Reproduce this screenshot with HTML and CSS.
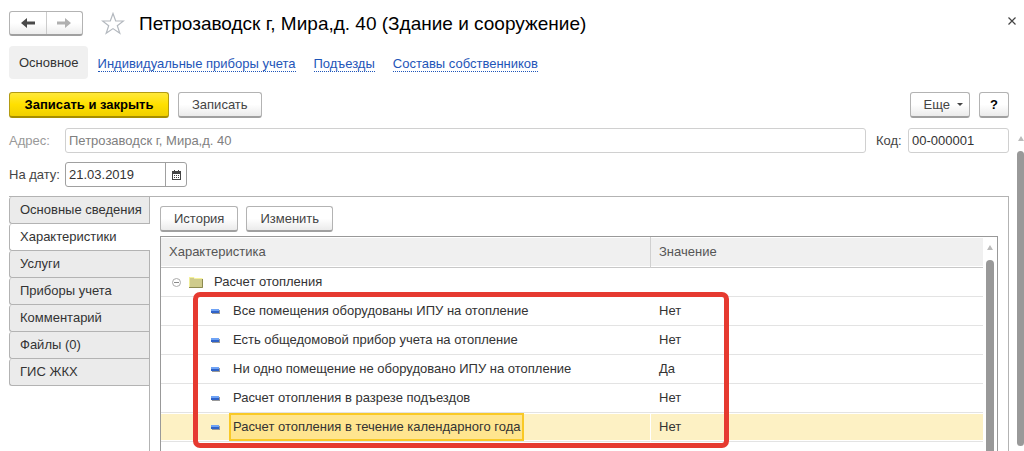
FILE: index.html
```html
<!DOCTYPE html>
<html lang="ru">
<head>
<meta charset="utf-8">
<title>Петрозаводск г, Мира,д. 40 (Здание и сооружение)</title>
<link rel="stylesheet" href="styles.css">
</head>
<body>
<header class="titlebar">
  <div class="history">
    <button class="history-btn" type="button" aria-label="Назад"><svg width="14" height="10" viewBox="0 0 14 10"><path d="M0 5 6 0v3.500h8v3H6V10z" fill="#4a4a4a"/></svg></button>
    <button class="history-btn" type="button" aria-label="Вперед"><svg width="14" height="10" viewBox="0 0 14 10"><path d="M14 5 8 0v3.500H0v3h8V10z" fill="#b0b0b0"/></svg></button>
  </div>
  <button class="icon-btn star" type="button" aria-label="В избранное"><svg width="24" height="23" viewBox="0 0 24 23"><path d="M12 1.500 14.700 9H22.500L16.300 13.700 18.800 21.200 12 16.600 5.200 21.200 7.700 13.700 1.500 9H9.300z" fill="#fff" stroke="#b3b8be" stroke-width="1.200"/></svg></button>
  <h1 class="title">Петрозаводск г, Мира,д. 40 (Здание и сооружение)</h1>
  <button class="icon-btn close" type="button" aria-label="Закрыть"><svg width="8" height="8" viewBox="0 0 8 8"><path d="M.5.5l7 7M7.500.5l-7 7" stroke="#444" stroke-width="1.200"/></svg></button>
</header>

<nav class="sections">
  <span class="section-current">Основное</span>
  <a class="section-link" href="#meters">Индивидуальные приборы учета</a>
  <a class="section-link" href="#entrances">Подъезды</a>
  <a class="section-link" href="#owners">Составы собственников</a>
</nav>

<div class="commands">
  <button class="btn btn-primary" type="button">Записать и закрыть</button>
  <button class="btn" type="button">Записать</button>
  <button class="btn btn-more" type="button">Еще<svg width="6" height="3" viewBox="0 0 6 3"><path d="M0 0h6L3 3z" fill="#444"/></svg></button>
  <button class="btn btn-help" type="button">?</button>
</div>

<main class="form">
  <div class="form-body">
    <div class="field-row">
      <label class="label label-muted" for="address">Адрес:</label>
      <input class="input input-muted" id="address" type="text" value="Петрозаводск г, Мира,д. 40" readonly>
      <label class="label label-code" for="code">Код:</label>
      <input class="input input-code" id="code" type="text" value="00-000001">
    </div>
    <div class="field-row">
      <label class="label" for="date">На дату:</label>
      <div class="date">
        <input class="date-input" id="date" type="text" value="21.03.2019">
        <button class="date-btn" type="button" aria-label="Выбрать дату"><svg width="9" height="10" viewBox="0 0 9 10"><path d="M0 1h9v9H0z" fill="#444"/><path d="M1 4h7v5H1z" fill="#fff"/><path d="M2 0h1v2H2zM6 0h1v2H6z" fill="#444"/><path d="M2 5h1v1H2zM4 5h1v1H4zM6 5h1v1H6zM2 7h1v1H2zM4 7h1v1H4zM6 7h1v1H6z" fill="#444"/></svg></button>
      </div>
    </div>

    <div class="pages">
      <div class="tabs" role="tablist">
        <button class="tab" role="tab" type="button">Основные сведения</button>
        <button class="tab tab-active" role="tab" type="button" aria-selected="true">Характеристики</button>
        <button class="tab" role="tab" type="button">Услуги</button>
        <button class="tab" role="tab" type="button">Приборы учета</button>
        <button class="tab" role="tab" type="button">Комментарий</button>
        <button class="tab" role="tab" type="button">Файлы (0)</button>
        <button class="tab" role="tab" type="button">ГИС ЖКХ</button>
      </div>
      <section class="page" role="tabpanel">
        <div class="page-commands">
          <button class="btn" type="button">История</button>
          <button class="btn" type="button">Изменить</button>
        </div>
        <div class="grid">
          <table class="table">
            <thead>
              <tr><th class="col-name">Характеристика</th><th>Значение</th></tr>
            </thead>
            <tbody>
              <tr><td colspan="2"><div class="cell group"><svg width="9" height="9" viewBox="0 0 9 9"><circle cx="4.500" cy="4.500" r="4" fill="#fff" stroke="#aaa"/><path d="M2 4.500h5" stroke="#888"/></svg><svg class="folder" width="14" height="11" viewBox="0 0 14 11"><path d="M0 1h5l1 1h8v9H0z" fill="#cfcb8c"/><path d="M0 .5h5l1 1h7.500" fill="none" stroke="#f6f39a"/><path d="M.5 1v9" stroke="#f0ed9a"/><path d="M0 10.500h13.500V2" fill="none" stroke="#8c8a50"/></svg>Расчет отопления</div></td></tr>
              <tr><td><div class="cell item"><i class="dash"></i><span class="text">Все помещения оборудованы ИПУ на отопление</span></div></td><td>Нет</td></tr>
              <tr><td><div class="cell item"><i class="dash"></i><span class="text">Есть общедомовой прибор учета на отопление</span></div></td><td>Нет</td></tr>
              <tr><td><div class="cell item"><i class="dash"></i><span class="text">Ни одно помещение не оборудовано ИПУ на отопление</span></div></td><td>Да</td></tr>
              <tr><td><div class="cell item"><i class="dash"></i><span class="text">Расчет отопления в разрезе подъездов</span></div></td><td>Нет</td></tr>
              <tr class="selected"><td><div class="cell item"><i class="dash"></i><span class="text text-current">Расчет отопления в течение календарного года</span></div></td><td>Нет</td></tr>
              <tr><td colspan="2"><div class="cell group group-next"><svg class="folder" width="14" height="11" viewBox="0 0 14 11"><path d="M0 1h5l1 1h8v9H0z" fill="#cfcb8c"/><path d="M0 .5h5l1 1h7.500" fill="none" stroke="#f6f39a"/></svg></div></td></tr>
            </tbody>
          </table>
          <div class="scroll scroll-grid"><i class="scroll-up"></i><i class="scroll-thumb"></i></div>
          <div class="highlight"></div>
        </div>
      </section>
    </div>
  </div>
  <div class="scroll scroll-form"><i class="scroll-up"></i><i class="scroll-thumb"></i></div>
</main>
</body>
</html>
```
FILE: styles.css
```css
* { box-sizing: border-box; }

body {
  margin: 0;
  height: 100vh;
  overflow: hidden;
  display: flex;
  flex-direction: column;
  background: #fff;
  color: #333;
  font: 13px/16px "Liberation Sans", Arial, sans-serif;
}

button, input { font: inherit; color: inherit; margin: 0; }
svg { display: block; flex: none; }

.titlebar {
  display: flex;
  align-items: center;
  height: 46px;
  padding: 0 8px 0 9px;
}
.history {
  display: flex;
  width: 74px;
  height: 25px;
  border: 1px solid #b3b3b3;
  border-bottom: 2px solid #a0a0a0;
  border-radius: 3px;
  background: linear-gradient(#fff 50%, #ededed);
}
.history-btn {
  flex: 1;
  display: flex;
  align-items: center;
  justify-content: center;
  padding: 0;
  border: 0;
  background: none;
}
.history-btn + .history-btn { border-left: 1px solid #ccc; }
.icon-btn { padding: 0; border: 0; background: none; }
.star { margin-left: 18px; }
.title {
  margin: 0 auto 0 14px;
  padding-top: 2px;
  color: #000;
  font-size: 19px;
  line-height: 24px;
  font-weight: 400;
}
.close { margin-bottom: 4px; }

.sections {
  display: flex;
  align-items: center;
  gap: 18px;
  padding-left: 9px;
}
.section-current {
  margin-right: -8px;
  padding: 9px 9px 8px 10px;
  border-radius: 4px;
  background: #f0f0f0;
}
.section-link {
  padding-top: 3px;
  color: #1e55b8;
  line-height: 14px;
  text-decoration: none;
  border-bottom: 1px dotted #1e55b8;
}

.commands {
  display: flex;
  gap: 9px;
  padding: 13px 15px 10px 9px;
}
.btn {
  height: 26px;
  padding: 0 13px;
  border: 1px solid #b3b3b3;
  border-bottom: 2px solid #a0a0a0;
  border-radius: 3px;
  background: linear-gradient(#fff 50%, #ebebeb);
  color: #444;
}
.btn-primary {
  min-width: 160px;
  border-color: #b39b12;
  border-bottom-color: #a68e00;
  background: linear-gradient(#ffe93b, #ffe000 50%, #f0cf00);
  color: #000;
  font-weight: 700;
}
.btn-more { display: flex; align-items: center; gap: 7px; margin-left: auto; padding-right: 6px; }
.btn-help { width: 30px; padding: 0; color: #000; font-weight: 700; }

.form { flex: 1; display: flex; min-height: 0; }
.form-body {
  flex: 1;
  display: flex;
  flex-direction: column;
  gap: 9px;
  min-width: 0;
  padding-left: 9px;
}
.field-row { display: flex; align-items: center; }
.label { width: 56px; color: #444; }
.label-muted { color: #999; }
.label-code { width: 32px; margin-left: 10px; }
.input {
  height: 25px;
  padding: 0 3px;
  border: 1px solid #d0d0d0;
  border-radius: 3px;
  background: #fff;
}
.input-muted { flex: 1; min-width: 0; color: #808080; }
.input-code { width: 101px; }
.date {
  display: flex;
  width: 122px;
  height: 25px;
  border: 1px solid #a0a0a0;
  border-radius: 3px;
}
.date-input { flex: 1; min-width: 0; padding: 0 3px; border: 0; background: none; }
.date-btn {
  display: flex;
  align-items: center;
  justify-content: center;
  width: 21px;
  padding: 0;
  border: 0;
  border-left: 1px solid #a0a0a0;
  background: none;
}

.pages { flex: 1; display: flex; min-height: 0; }
.tabs { width: 141px; flex: none; border-right: 1px solid #b3b3b3; border-top: 1px solid #b3b3b3; }
.tab {
  display: block;
  width: 100%;
  height: 27px;
  padding: 0 0 0 10px;
  border: 1px solid #b3b3b3;
  border-width: 0 0 1px 1px;
  border-radius: 3px 0 0 3px;
  background: #ebebeb;
  text-align: left;
  white-space: nowrap;
}
.tab-active { width: 141px; background: #fff; }
.page {
  flex: 1;
  display: flex;
  flex-direction: column;
  gap: 4px;
  min-width: 0;
  padding: 9px 10px 0;
  border: 1px solid #b3b3b3;
  border-width: 1px 1px 0 0;
}
.page-commands { display: flex; gap: 8px; }

.grid {
  flex: 1;
  position: relative;
  display: flex;
  align-items: flex-start;
  min-height: 0;
  overflow: hidden;
  border: 1px solid #999;
  border-bottom: 0;
}
.table { flex: 1; border-collapse: separate; border-spacing: 0; table-layout: fixed; }
th, td { padding: 0 8px; border-bottom: 1px solid #e3e3e3; text-align: left; }
th {
  height: 31px;
  border-color: #c8c8c8;
  background: #f0f0f0;
  box-shadow: inset 0 1px #fff, inset 0 -1px #fff;
  color: #555;
  font-weight: 400;
}
.col-name { width: 490px; border-right: 1px solid #d0d0d0; }
td { height: 29px; }
.cell { display: flex; align-items: center; }
.group { padding-left: 3px; }
.group-next { padding-left: 12px; }
.folder { margin: 0 11px 0 8px; }
.item { padding-left: 42px; }
.dash {
  width: 8px;
  height: 4px;
  margin-right: 10px;
  background: linear-gradient(#6fa3f5 50%, #2f62c8 50%);
  box-shadow: 1px 1px #999;
}
.text { padding: 4px 2px; border: 2px solid transparent; white-space: nowrap; }
.text-current { border-color: #f9c926; background: #ffe58f; }
.selected td { background: #fdf1c4; box-shadow: inset 0 1px #fff, inset 0 -1px #fff; }
.selected td:first-child { border-right: 1px solid #fff; }

.highlight {
  position: absolute;
  top: 55px;
  left: 32px;
  width: 536px;
  height: 156px;
  border: 5px solid #e63a30;
  border-radius: 7px;
  pointer-events: none;
}

.scroll {
  display: flex;
  flex-direction: column;
  align-items: center;
  align-self: stretch;
  gap: 10px;
  flex: none;
}
.scroll-grid { width: 14px; padding-top: 8px; }
.scroll-form { width: 15px; padding: 8px 0 5px 8px; }
.scroll-up {
  border: 3px solid transparent;
  border-top: 0;
  border-bottom: 5px solid #bbb;
}
.scroll-thumb { flex: 1; width: 8px; border-radius: 4px 4px 0 0; background: #999; }
.scroll-form .scroll-thumb { width: 7px; border-radius: 4px; }
```
